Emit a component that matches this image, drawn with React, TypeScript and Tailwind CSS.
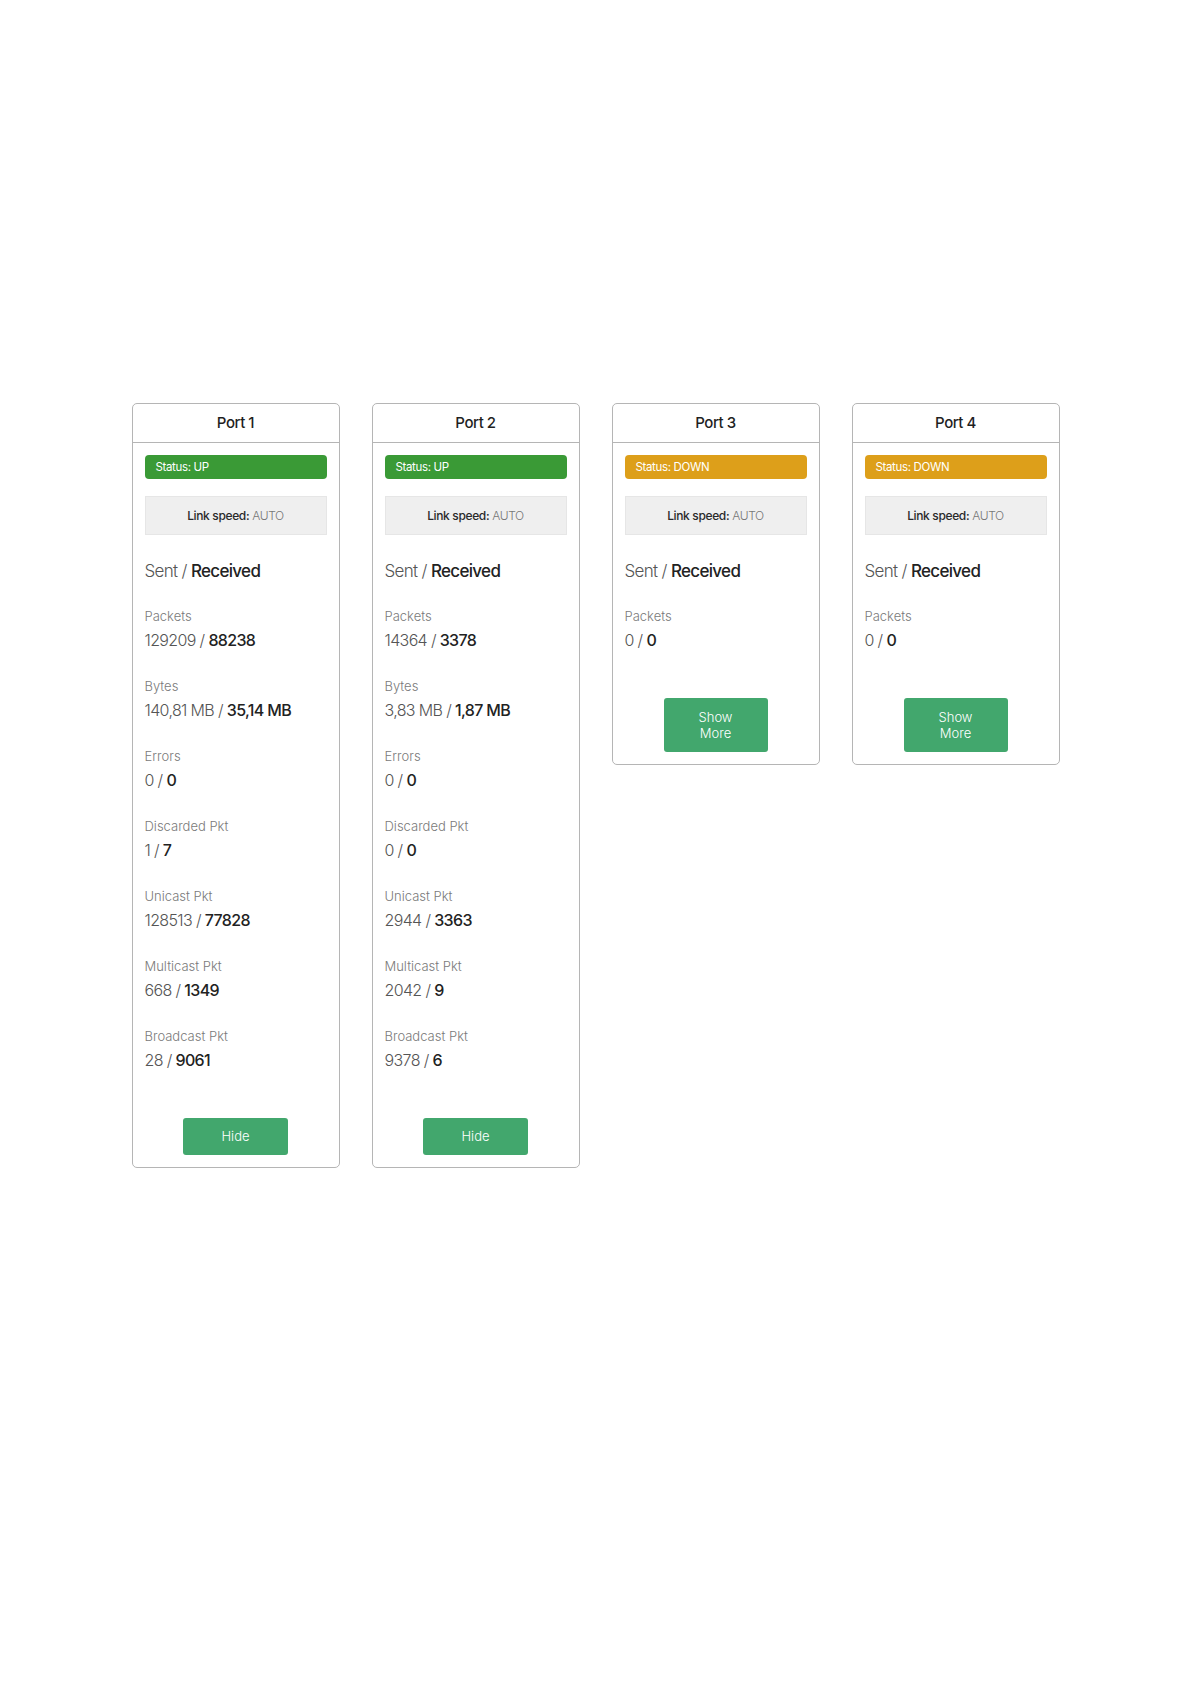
const ports = [
  {
    name: "Port 1",
    up: true,
    expanded: true,
    stats: [
      ["Packets", "129209", "88238"],
      ["Bytes", "140,81 MB", "35,14 MB"],
      ["Errors", "0", "0"],
      ["Discarded Pkt", "1", "7"],
      ["Unicast Pkt", "128513", "77828"],
      ["Multicast Pkt", "668", "1349"],
      ["Broadcast Pkt", "28", "9061"],
    ],
  },
  {
    name: "Port 2",
    up: true,
    expanded: true,
    stats: [
      ["Packets", "14364", "3378"],
      ["Bytes", "3,83 MB", "1,87 MB"],
      ["Errors", "0", "0"],
      ["Discarded Pkt", "0", "0"],
      ["Unicast Pkt", "2944", "3363"],
      ["Multicast Pkt", "2042", "9"],
      ["Broadcast Pkt", "9378", "6"],
    ],
  },
  {
    name: "Port 3",
    up: false,
    expanded: false,
    stats: [["Packets", "0", "0"]],
  },
  {
    name: "Port 4",
    up: false,
    expanded: false,
    stats: [["Packets", "0", "0"]],
  },
];

function PortCard({ port }: { port: (typeof ports)[number] }) {
  return (
    <div className="w-[208px] border border-[#b5b5b5] rounded-[5px] bg-white">
      <div className="h-[39px] flex items-center justify-center border-b border-[#b5b5b5] text-[15px] font-medium text-[#1f1f1f] tracking-[-0.03em]">
        {port.name}
      </div>
      <div className="px-[12px] pt-[12px] pb-[12px]">
        <div
          className={
            port.up
              ? "h-[24px] rounded-[4px] bg-[#3a9a36] text-white text-[11.5px] flex items-center pl-[11px] pt-[1px] tracking-[-0.03em]"
              : "h-[24px] rounded-[4px] bg-[#dd9f1a] text-white text-[11.5px] flex items-center pl-[11px] pt-[1px] tracking-[-0.03em]"
          }
        >
          Status: {port.up ? "UP" : "DOWN"}
        </div>
        <div className="mt-[17px] h-[39px] bg-[#efefef] border border-[#e6e6e6] flex items-center justify-center pt-[1px] text-[12px] tracking-[-0.03em]">
          <span className="font-medium text-[#2a2a2a]">Link speed:</span>
          <span className="ml-[3px] text-[#777] font-light">AUTO</span>
        </div>
        <div className="mt-[24px] text-[17px] leading-[24px] tracking-[-0.04em]">
          <span className="text-[#555] font-light">Sent / </span>
          <span className="text-[#222] font-medium">Received</span>
        </div>
        <div className="mt-[23px] flex flex-col gap-[24px]">
          {port.stats.map((s, i) => (
            <div key={i}>
              <div className="text-[13px] leading-[20px] text-[#7a7a7a] font-light">{s[0]}</div>
              <div className="mt-[2px] text-[16px] leading-[24px] tracking-[-0.04em]">
                <span className="text-[#555] font-light">{s[1]} / </span>
                <span className="text-[#222] font-medium">{s[2]}</span>
              </div>
            </div>
          ))}
        </div>
        <div className="mt-[46px] flex justify-center">
          {port.expanded ? (
            <button className="w-[105px] h-[37px] rounded-[3px] bg-[#42a76d] text-white text-[13px] font-light">
              Hide
            </button>
          ) : (
            <button className="w-[104px] h-[54px] rounded-[3px] bg-[#42a76d] text-white text-[13px] leading-[16px] font-light">
              Show
              <br />
              More
            </button>
          )}
        </div>
      </div>
    </div>
  );
}

export default function App() {
  return (
    <div
      className="min-h-[1684px] bg-white pt-[403px]"
      style={{ fontFamily: "Inter, 'Noto Sans', sans-serif" }}
    >
      <div className="flex justify-center items-start gap-[32px]">
        {ports.map((p) => (
          <PortCard key={p.name} port={p} />
        ))}
      </div>
    </div>
  );
}
